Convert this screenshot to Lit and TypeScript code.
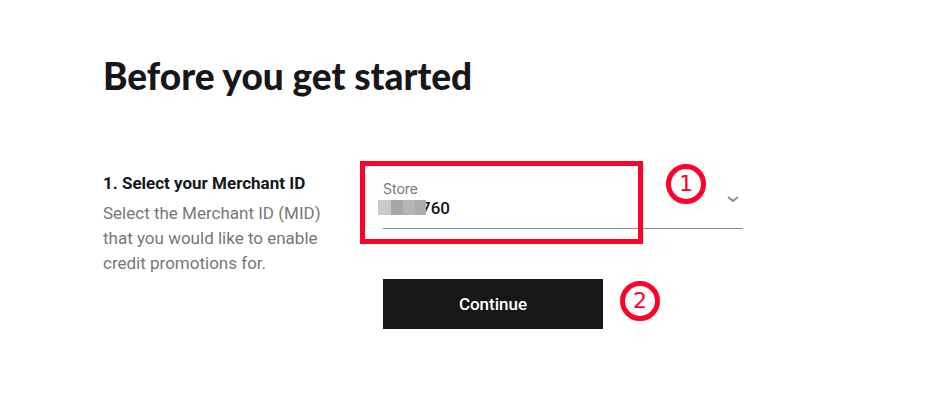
import { LitElement, html, css } from "lit";
import { customElement } from "lit/decorators.js";

@customElement("step-badge")
class StepBadge extends LitElement {
  static styles = css`
    :host {
      box-sizing: border-box;
      display: flex;
      align-items: center;
      justify-content: center;
      width: 40px;
      height: 40px;
      border: 5px solid #ff0029;
      border-radius: 50%;
      background: #fff;
      color: #ff0029;
      font: 22px/30px "DejaVu Sans", sans-serif;
    }
  `;
  render() {
    return html`<slot></slot>`;
  }
}

@customElement("store-field")
class StoreField extends LitElement {
  static styles = css`
    :host {
      display: block;
      position: relative;
      height: 50px;
      border-bottom: 1px solid #8d8d8f;
    }
    label {
      display: block;
      padding-top: 3px;
      color: #77777a;
      font: 14px/16px Inter, sans-serif;
    }
    select {
      appearance: none;
      display: block;
      width: 100%;
      height: 22px;
      margin: 0;
      padding: 0 0 0 38px;
      border: 0;
      border-radius: 0;
      background: transparent;
      color: #17171a;
      font: 500 17px/22px Roboto, sans-serif;
    }
    .chevron {
      position: absolute;
      right: 4px;
      top: 17px;
      width: 12px;
      height: 8px;
      pointer-events: none;
    }
    .mask {
      position: absolute;
      left: -5px;
      top: 22px;
      width: 48px;
      height: 15px;
      background: linear-gradient(
        90deg,
        #cacac9 0 13px,
        #a4a6a9 13px 25px,
        #b5b5b3 25px 37px,
        #adadab 37px
      );
    }
    .frame {
      box-sizing: border-box;
      position: absolute;
      left: -23px;
      top: -17px;
      right: 100px;
      height: 83px;
      border: 5px solid #ff0029;
      pointer-events: none;
    }
    step-badge {
      position: absolute;
      right: 37px;
      top: -14px;
    }
  `;
  render() {
    return html`
      <label for="store">Store</label>
      <select id="store">
        <option>760</option>
      </select>
      <span class="mask"></span>
      <svg class="chevron" viewBox="0 0 12 8" aria-hidden="true">
        <path d="M1 2L6 6L11 2" fill="none" stroke="#8d8d8f" stroke-width="2" />
      </svg>
      <span class="frame"></span>
      <step-badge>1</step-badge>
    `;
  }
}

@customElement("app-root")
class AppRoot extends LitElement {
  static styles = css`
    :host {
      display: block;
      box-sizing: border-box;
      padding: 54px 32px 56px 103px;
      background: #fff;
      color: #17171a;
      font-family: Roboto, sans-serif;
    }
    main {
      max-width: 640px;
    }
    h1 {
      margin: 0 0 74px;
      font: 900 37px/44px Lato, sans-serif;
    }
    .step {
      display: grid;
      grid-template-columns: 224px 1fr;
      column-gap: 56px;
    }
    h2 {
      margin: 0 0 7px;
      font-size: 17px;
      font-weight: 700;
      line-height: 22px;
    }
    p {
      margin: 0;
      color: #77777a;
      font-size: 17px;
      line-height: 25px;
    }
    form {
      padding-top: 6px;
    }
    .actions {
      display: flex;
      align-items: flex-start;
      gap: 17px;
      margin-top: 50px;
    }
    .actions step-badge {
      margin-top: 2px;
    }
    button {
      width: 220px;
      height: 50px;
      padding: 0;
      border: 0;
      background: #171717;
      color: #fff;
      font: 500 17px/24px Roboto, sans-serif;
    }
  `;
  render() {
    return html`
      <main>
        <h1>Before you get started</h1>
        <section class="step">
          <div>
            <h2>1. Select your Merchant ID</h2>
            <p>Select the Merchant ID (MID) that you would like to enable credit promotions for.</p>
          </div>
          <form>
            <store-field></store-field>
            <div class="actions">
              <button type="button">Continue</button>
              <step-badge>2</step-badge>
            </div>
          </form>
        </section>
      </main>
    `;
  }
}
